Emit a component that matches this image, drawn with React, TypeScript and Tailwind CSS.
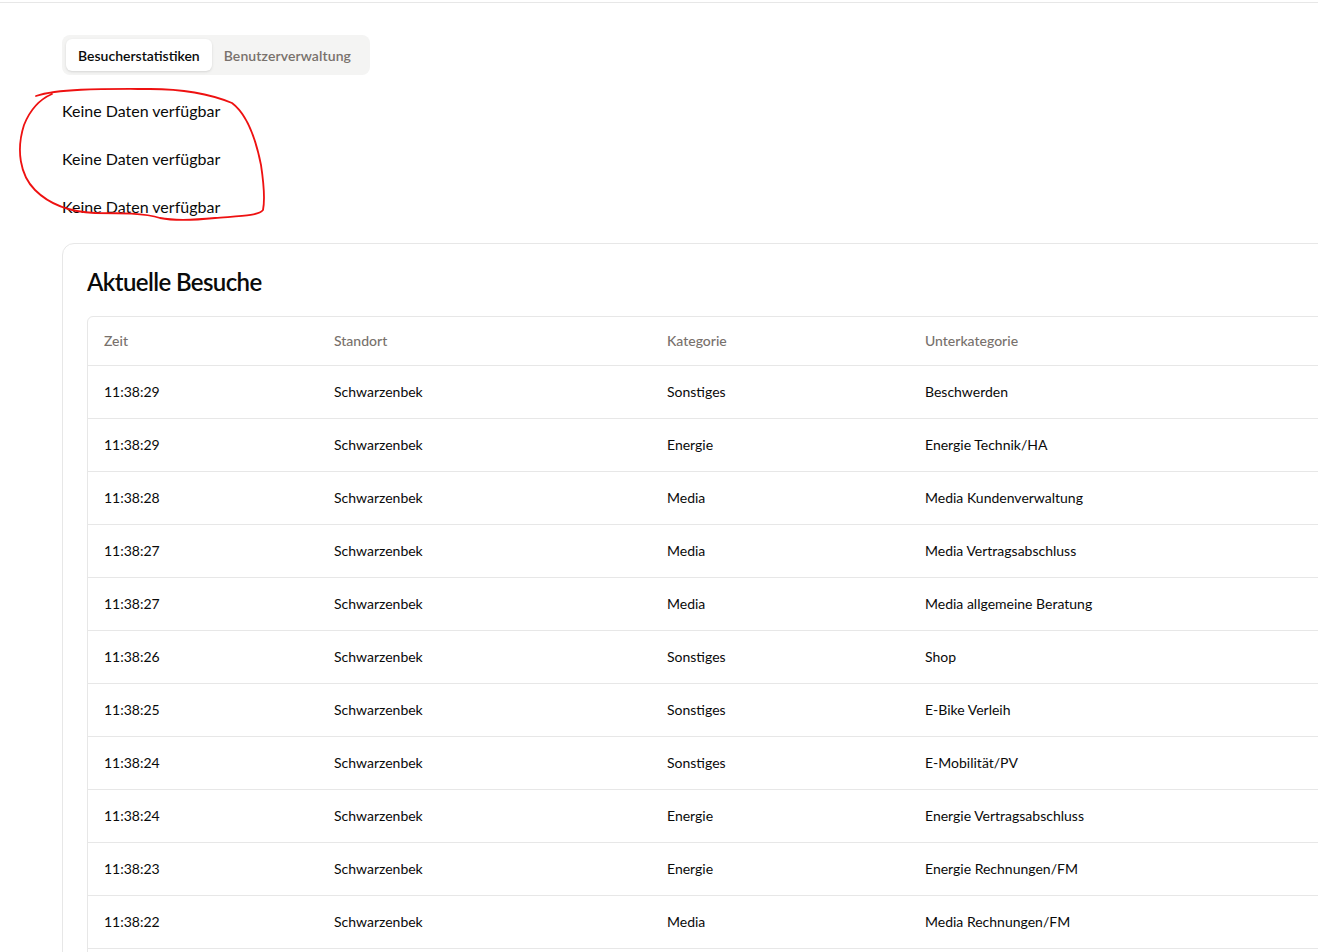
import React from "react";

const rows: [string, string, string, string][] = [
  ["11:38:29", "Schwarzenbek", "Sonstiges", "Beschwerden"],
  ["11:38:29", "Schwarzenbek", "Energie", "Energie Technik/HA"],
  ["11:38:28", "Schwarzenbek", "Media", "Media Kundenverwaltung"],
  ["11:38:27", "Schwarzenbek", "Media", "Media Vertragsabschluss"],
  ["11:38:27", "Schwarzenbek", "Media", "Media allgemeine Beratung"],
  ["11:38:26", "Schwarzenbek", "Sonstiges", "Shop"],
  ["11:38:25", "Schwarzenbek", "Sonstiges", "E-Bike Verleih"],
  ["11:38:24", "Schwarzenbek", "Sonstiges", "E-Mobilität/PV"],
  ["11:38:24", "Schwarzenbek", "Energie", "Energie Vertragsabschluss"],
  ["11:38:23", "Schwarzenbek", "Energie", "Energie Rechnungen/FM"],
  ["11:38:22", "Schwarzenbek", "Media", "Media Rechnungen/FM"],
  ["11:38:21", "Schwarzenbek", "Media", "Media Kundenverwaltung"],
];

export default function App() {
  return (
    <div
      className="relative w-[1318px] h-[952px] overflow-hidden bg-white text-[#0a0a0a]"
      style={{ fontFamily: "Lato, 'Noto Sans', sans-serif" }}
    >
      <div className="h-[3px] border-b border-[#e7e7e7]" />
      <div className="pl-[62px] pt-[32px] w-[1700px]">
        <div className="inline-flex items-center h-[40px] p-[4px] rounded-lg bg-[#f4f4f3]">
          <div className="h-[32px] px-[12px] flex items-center rounded-md bg-white shadow-sm text-[14px] font-semibold text-[#0a0a0a]">
            Besucherstatistiken
          </div>
          <div className="h-[32px] pl-[12px] pr-[15px] flex items-center text-[14px] font-semibold tracking-[0.1px] text-[#78716c]">
            Benutzerverwaltung
          </div>
        </div>

        <div className="mt-[24px] flex flex-col gap-[24px] text-[16px] leading-[24px]">
          <p>Keine Daten verfügbar</p>
          <p>Keine Daten verfügbar</p>
          <p>Keine Daten verfügbar</p>
        </div>

        <div className="mt-[24px] border border-[#e7e7e7] rounded-xl p-[24px] w-[1500px]">
          <h2 className="text-[24px] leading-[28px] font-semibold tracking-tight">Aktuelle Besuche</h2>
          <div className="mt-[20px] border border-[#e7e7e7] rounded-md">
            <table className="w-full text-[14px] border-collapse">
              <thead>
                <tr className="border-b border-[#e7e7e7]">
                  <th className="h-[48px] w-[230px] px-[16px] text-left font-medium text-[#78716c]">Zeit</th>
                  <th className="h-[48px] w-[333px] px-[16px] text-left font-medium text-[#78716c]">Standort</th>
                  <th className="h-[48px] w-[258px] px-[16px] text-left font-medium text-[#78716c]">Kategorie</th>
                  <th className="h-[48px] px-[16px] text-left font-medium text-[#78716c]">Unterkategorie</th>
                </tr>
              </thead>
              <tbody>
                {rows.map((r, i) => (
                  <tr key={i} className="border-b border-[#e7e7e7]">
                    {r.map((c, j) => (
                      <td key={j} className="p-[16px] leading-[20px]">
                        {c}
                      </td>
                    ))}
                  </tr>
                ))}
              </tbody>
            </table>
          </div>
        </div>
      </div>

      <svg
        className="absolute left-0 top-0 pointer-events-none"
        width="1318"
        height="952"
        viewBox="0 0 1318 952"
        fill="none"
      >
        <path
          d="M36 96 C 60 88, 110 89, 150 89 C 190 89, 215 96, 232 103 C 248 115, 256 140, 261 165 C 264 185, 265 200, 263 210 C 258 216, 240 216, 215 218 C 195 220, 175 221, 160 218 C 145 213, 120 213, 95 213 C 70 212, 50 205, 35 190 C 20 175, 16 150, 24 125 C 30 110, 38 100, 52 94"
          stroke="#ee1111"
          strokeWidth="1.8"
          strokeLinecap="round"
        />
      </svg>
    </div>
  );
}
